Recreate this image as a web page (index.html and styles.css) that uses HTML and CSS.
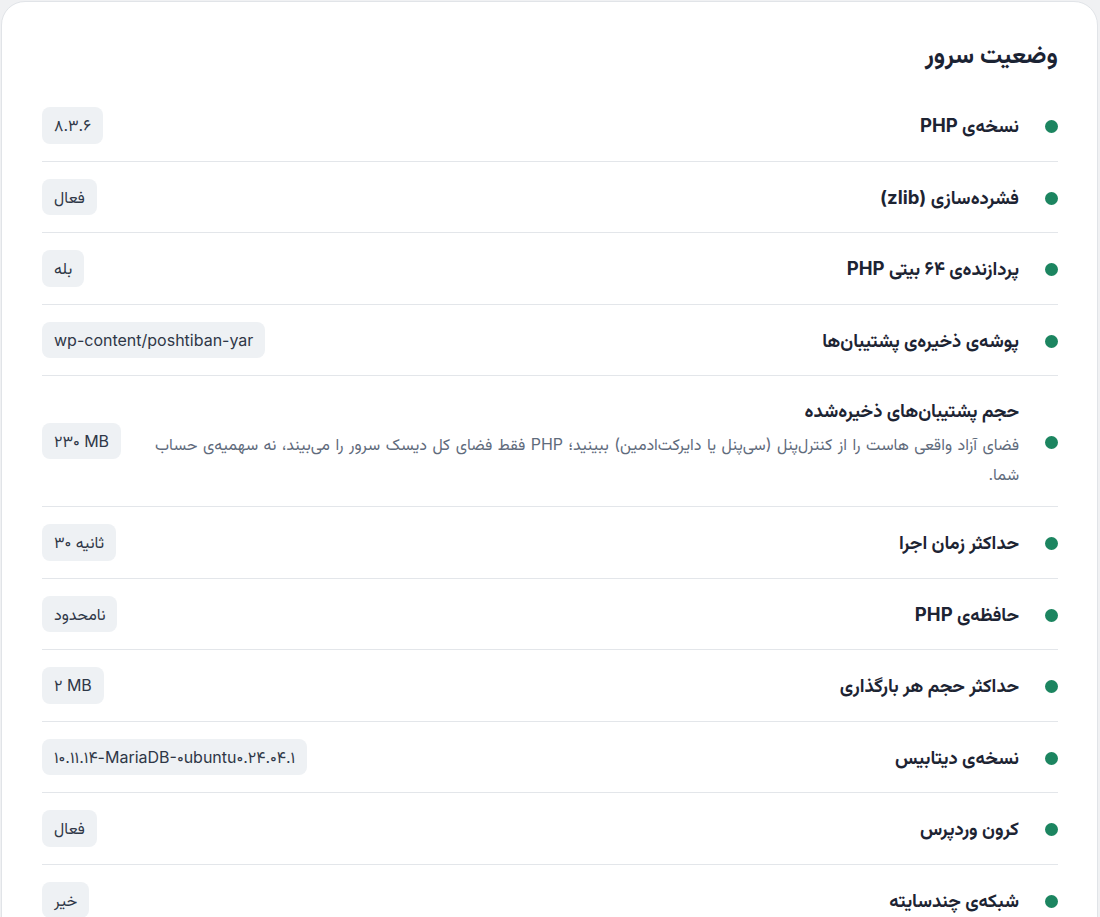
FILE: index.html
```html
<!DOCTYPE html>
<html lang="fa" dir="rtl">
<head>
  <meta charset="UTF-8">
  <meta name="viewport" content="width=device-width, initial-scale=1.0">
  <title>وضعیت سرور</title>
  <link rel="stylesheet" href="styles.css">
</head>
<body>

  <div class="card">
    <h2 class="card-title">وضعیت سرور</h2>

    <ul class="status-list">
      <li class="status-row">
        <span class="dot"></span>
        <div class="status-text"><strong>نسخه&zwnj;ی PHP</strong></div>
        <span class="badge">۸.۳.۶</span>
      </li>
      <li class="status-row">
        <span class="dot"></span>
        <div class="status-text"><strong>فشرده&zwnj;سازی (zlib)</strong></div>
        <span class="badge">فعال</span>
      </li>
      <li class="status-row">
        <span class="dot"></span>
        <div class="status-text"><strong>پردازنده&zwnj;ی ۶۴ بیتی PHP</strong></div>
        <span class="badge">بله</span>
      </li>
      <li class="status-row">
        <span class="dot"></span>
        <div class="status-text"><strong>پوشه&zwnj;ی ذخیره&zwnj;ی پشتیبان&zwnj;ها</strong></div>
        <span class="badge">wp-content/poshtiban-yar</span>
      </li>
      <li class="status-row">
        <span class="dot"></span>
        <div class="status-text">
          <strong>حجم پشتیبان&zwnj;های ذخیره&zwnj;شده</strong>
          <p class="status-desc">فضای آزاد واقعی هاست را از کنترل&zwnj;پنل (سی&zwnj;پنل یا دایرکت&zwnj;ادمین) ببینید؛ PHP فقط فضای کل دیسک سرور را می&zwnj;بیند، نه سهمیه&zwnj;ی حساب شما.</p>
        </div>
        <span class="badge">۲۳۰ MB</span>
      </li>
      <li class="status-row">
        <span class="dot"></span>
        <div class="status-text"><strong>حداکثر زمان اجرا</strong></div>
        <span class="badge">۳۰ ثانیه</span>
      </li>
      <li class="status-row">
        <span class="dot"></span>
        <div class="status-text"><strong>حافظه&zwnj;ی PHP</strong></div>
        <span class="badge">نامحدود</span>
      </li>
      <li class="status-row">
        <span class="dot"></span>
        <div class="status-text"><strong>حداکثر حجم هر بارگذاری</strong></div>
        <span class="badge">۲ MB</span>
      </li>
      <li class="status-row">
        <span class="dot"></span>
        <div class="status-text"><strong>نسخه&zwnj;ی دیتابیس</strong></div>
        <span class="badge">۱۰.۱۱.۱۴-MariaDB-۰ubuntu۰.۲۴.۰۴.۱</span>
      </li>
      <li class="status-row">
        <span class="dot"></span>
        <div class="status-text"><strong>کرون وردپرس</strong></div>
        <span class="badge">فعال</span>
      </li>
      <li class="status-row">
        <span class="dot"></span>
        <div class="status-text"><strong>شبکه&zwnj;ی چندسایته</strong></div>
        <span class="badge">خیر</span>
      </li>
    </ul>
  </div>

</body>
</html>
```

FILE: styles.css
```css
* {
  box-sizing: border-box;
}
body, html {
  margin: 0;
  padding: 0;
}

body {
  background-color: #f0f1f3;
  padding: 1px 2px 0 1px;
  font-family: Inter, Vazirmatn, "Noto Sans Arabic", "DejaVu Sans", sans-serif;
  color: #1d2433;
}

.card {
  background: #fff;
  border: 1px solid #e1e4e8;
  border-radius: 24px;
  padding: 34px 39px 40px 40px;
}

.card-title {
  margin: 0 0 18px;
  font-size: 24.5px;
  font-weight: bold;
  line-height: 36px;
  color: #1b2333;
}

.status-list {
  list-style: none;
  margin: 0;
  padding: 0;
}

.status-row {
  display: flex;
  align-items: center;
  padding: 17px 0;
  border-bottom: 1px solid #e3e6ea;
}

.dot {
  flex: none;
  width: 13px;
  height: 13px;
  border-radius: 50%;
  background-color: #1c8560;
  margin-left: 26px;
  margin-top: 3px;
}

.status-text {
  flex: 1;
  margin-left: 20px;
}

.status-text strong {
  display: block;
  font-size: 18.5px;
  line-height: 34px;
  color: #1d2433;
}

.status-desc {
  margin: 2px 0 0;
  font-size: 16px;
  word-spacing: 1px;
  line-height: 30px;
  color: #5f6b7c;
}

.badge {
  flex: none;
  direction: ltr;
  background-color: #eef1f4;
  border-radius: 8px;
  padding: 0 12px;
  height: 36.5px;
  line-height: 36.5px;
  font-size: 16px;
  color: #2e3747;
}
```
